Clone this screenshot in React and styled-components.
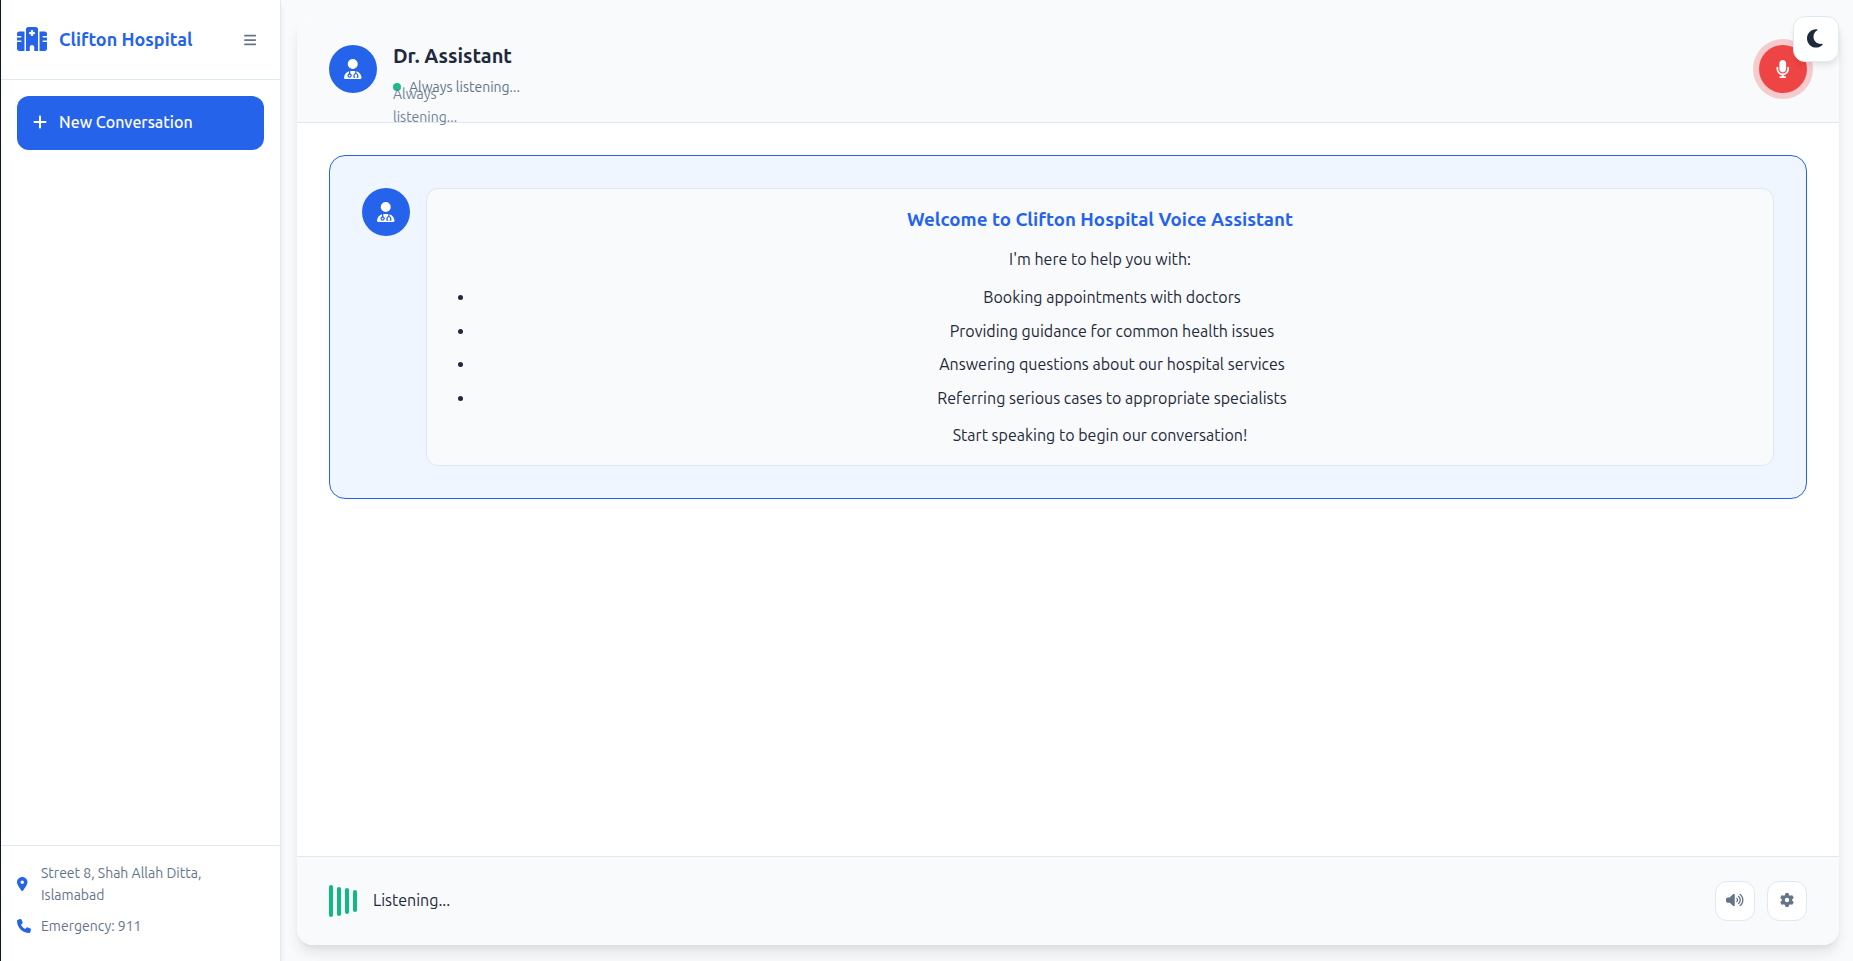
import React from 'react';
import styled, { createGlobalStyle, css } from 'styled-components';
import {
  FaHospital,
  FaBars,
  FaPlus,
  FaLocationDot,
  FaPhone,
  FaUserDoctor,
  FaMicrophone,
  FaMoon,
  FaVolumeHigh,
  FaGear,
} from 'react-icons/fa6';

const color = {
  primary: '#2563eb',
  primarySoft: '#eff6ff',
  page: '#f8fafc',
  surface: '#ffffff',
  border: '#e2e8f0',
  text: '#1e293b',
  muted: '#64748b',
  green: '#10b981',
  red: '#ef4444',
};

const GlobalStyle = createGlobalStyle`
  *, *::before, *::after { box-sizing: border-box; margin: 0; padding: 0; }
  body {
    font-family: Ubuntu, "Open Sans", "Noto Sans", sans-serif;
    font-size: 16px;
    line-height: 1.6;
    color: ${color.text};
    background: ${color.page};
    overflow: hidden;
  }
  button { font: inherit; cursor: pointer; }
`;

/* Font Awesome glyphs differ in width; $ratio is glyph width over height. */
const Glyph = styled.span`
  display: block;
  flex-shrink: 0;

  svg {
    display: block;
    width: ${({ $ratio = 1 }) => $ratio}em;
    height: 1em;
  }
`;

const Page = styled.div`
  display: flex;
  height: 100vh;
  border-left: 1px solid #0f172a;
`;

const Sidebar = styled.aside`
  display: flex;
  flex-direction: column;
  flex: 0 0 280px;
  background: ${color.surface};
  border-right: 1px solid ${color.border};
  box-shadow: 0 4px 6px -1px rgba(0, 0, 0, 0.1);
`;

const SidebarHeader = styled.div`
  display: flex;
  align-items: center;
  justify-content: space-between;
  height: 80px;
  padding: 0 24px 0 16px;
  border-bottom: 1px solid ${color.border};
`;

const Brand = styled.div`
  display: flex;
  align-items: center;
  gap: 12px;
  font-size: 18px;
  font-weight: 600;
  color: ${color.primary};
`;

const BrandGlyph = styled(Glyph)`
  font-size: 24px;
`;

const MenuButton = styled.button`
  border: none;
  background: none;
  color: ${color.muted};
  font-size: 14px;
`;

const SidebarBody = styled.div`
  flex: 1;
  padding: 16px;
`;

const NewButton = styled.button`
  display: flex;
  align-items: center;
  gap: 12px;
  width: 100%;
  padding: 14px 16px;
  border: none;
  border-radius: 12px;
  background: ${color.primary};
  color: #fff;
  font-weight: 500;
`;

const PlusGlyph = styled(Glyph)`
  margin-bottom: 1px;
`;

const SidebarFooter = styled.div`
  padding: 16px;
  border-top: 1px solid ${color.border};
`;

const Contact = styled.div`
  display: flex;
  align-items: center;
  gap: 8px;
  margin-bottom: 8px;
  font-size: 14px;
  color: ${color.muted};
`;

const ContactGlyph = styled(Glyph)`
  width: 16px;
  color: ${color.primary};
`;

const Main = styled.main`
  display: flex;
  flex-direction: column;
  flex: 1;
  margin: 16px 14px 16px 16px;
  border-radius: 16px;
  background: ${color.surface};
  box-shadow: 0 10px 15px -3px rgba(0, 0, 0, 0.1), 0 4px 6px -2px rgba(0, 0, 0, 0.05);
`;

const MainHeader = styled.header`
  display: flex;
  align-items: center;
  justify-content: space-between;
  padding: 24px 32px;
  border-bottom: 1px solid ${color.border};
  border-radius: 16px 16px 0 0;
  background: ${color.page};
`;

const Doctor = styled.div`
  display: flex;
  align-items: center;
  gap: 16px;
`;

const Avatar = styled.div`
  display: flex;
  align-items: center;
  justify-content: center;
  flex: 0 0 48px;
  height: 48px;
  border-radius: 50%;
  background: ${color.primary};
  color: #fff;
  font-size: 20px;
`;

const DoctorInfo = styled.div`
  position: relative;
`;

const DoctorName = styled.h2`
  font-size: 20px;
  font-weight: 600;
  line-height: 32px;
`;

const Status = styled.div`
  display: flex;
  align-items: center;
  gap: 8px;
  margin-top: 4px;
  font-size: 14px;
  color: ${color.muted};
`;

const Dot = styled.span`
  width: 8px;
  height: 8px;
  border-radius: 50%;
  background: ${color.green};
  opacity: 0.95;
`;

const StatusEcho = styled.div`
  position: absolute;
  top: 43px;
  left: 0;
  width: 70px;
  font-size: 14px;
  line-height: 23px;
  color: ${color.muted};
  opacity: 0.9;
`;

const MicButton = styled.button`
  display: flex;
  align-items: center;
  justify-content: center;
  width: 48px;
  height: 48px;
  border: none;
  border-radius: 50%;
  background: ${color.red};
  color: #fff;
  font-size: 18px;
  box-shadow: 0 0 0 6px rgba(239, 68, 68, 0.26);
`;

const Messages = styled.section`
  flex: 1;
  padding: 32px;
`;

const WelcomeCard = styled.article`
  display: flex;
  align-items: flex-start;
  gap: 16px;
  padding: 32px;
  border: 1px solid ${color.primary};
  border-radius: 16px;
  background: ${color.primarySoft};
`;

const Bubble = styled.div`
  flex: 1;
  padding: 16px 24px;
  border: 1px solid ${color.border};
  border-radius: 12px;
  background: ${color.page};
  text-align: center;
`;

const BubbleTitle = styled.h3`
  margin-bottom: 12px;
  font-size: 1.17em;
  font-weight: 600;
  color: ${color.primary};
`;

const Topics = styled.ul`
  margin: 12px 0;
  padding-left: 24px;
`;

const Topic = styled.li`
  & + & { margin-top: 8px; }
`;

const MainFooter = styled.footer`
  display: flex;
  align-items: center;
  justify-content: space-between;
  padding: 24px 32px;
  border-top: 1px solid ${color.border};
  border-radius: 0 0 16px 16px;
  background: ${color.page};
`;

const Group = styled.div`
  display: flex;
  align-items: center;
  gap: ${({ $gap }) => $gap}px;
`;

const WaveBar = styled.span`
  width: 4px;
  height: ${({ $height }) => $height}px;
  border-radius: 2px;
  background: ${color.green};
`;

const square = css`
  display: flex;
  align-items: center;
  justify-content: center;
  border: 1px solid ${color.border};
  border-radius: 12px;
  background: ${color.surface};
`;

const ControlButton = styled.button`
  ${square}
  width: 40px;
  height: 40px;
  padding-bottom: 2px;
  color: ${color.muted};
  font-size: 14px;
`;

const ThemeButton = styled.button`
  ${square}
  position: fixed;
  top: 16px;
  right: 14px;
  width: 46px;
  height: 46px;
  padding: 0 2px 1px 0;
  color: ${color.text};
  font-size: 20.8px;
  box-shadow: 0 4px 6px -1px rgba(0, 0, 0, 0.1);
`;

const topics = [
  'Booking appointments with doctors',
  'Providing guidance for common health issues',
  'Answering questions about our hospital services',
  'Referring serious cases to appropriate specialists',
];

const waveHeights = [31.6, 29, 26, 22.4];

function DoctorAvatar() {
  return (
    <Avatar>
      <Glyph $ratio={0.875}><FaUserDoctor /></Glyph>
    </Avatar>
  );
}

export default function App() {
  return (
    <>
      <GlobalStyle />
      <Page>
        <Sidebar>
          <SidebarHeader>
            <Brand>
              <BrandGlyph $ratio={1.25}><FaHospital /></BrandGlyph>
              <span>Clifton Hospital</span>
            </Brand>
            <MenuButton aria-label="Toggle menu">
              <Glyph $ratio={0.875}><FaBars /></Glyph>
            </MenuButton>
          </SidebarHeader>
          <SidebarBody>
            <NewButton>
              <PlusGlyph $ratio={0.875}><FaPlus /></PlusGlyph>
              <span>New Conversation</span>
            </NewButton>
          </SidebarBody>
          <SidebarFooter>
            <Contact>
              <ContactGlyph $ratio={0.75}><FaLocationDot /></ContactGlyph>
              <span>Street 8, Shah Allah Ditta, Islamabad</span>
            </Contact>
            <Contact>
              <ContactGlyph><FaPhone /></ContactGlyph>
              <span>Emergency: 911</span>
            </Contact>
          </SidebarFooter>
        </Sidebar>

        <Main>
          <MainHeader>
            <Doctor>
              <DoctorAvatar />
              <DoctorInfo>
                <DoctorName>Dr. Assistant</DoctorName>
                <Status>
                  <Dot />
                  <span>Always listening...</span>
                </Status>
                <StatusEcho>Always listening...</StatusEcho>
              </DoctorInfo>
            </Doctor>
            <MicButton aria-label="Microphone">
              <Glyph $ratio={0.75}><FaMicrophone /></Glyph>
            </MicButton>
          </MainHeader>

          <Messages>
            <WelcomeCard>
              <DoctorAvatar />
              <Bubble>
                <BubbleTitle>Welcome to Clifton Hospital Voice Assistant</BubbleTitle>
                <p>I'm here to help you with:</p>
                <Topics>
                  {topics.map((topic) => <Topic key={topic}>{topic}</Topic>)}
                </Topics>
                <p>Start speaking to begin our conversation!</p>
              </Bubble>
            </WelcomeCard>
          </Messages>

          <MainFooter>
            <Group $gap={16}>
              <Group $gap={4}>
                {waveHeights.map((height) => <WaveBar key={height} $height={height} />)}
              </Group>
              <span>Listening...</span>
            </Group>
            <Group $gap={12}>
              <ControlButton aria-label="Volume">
                <Glyph $ratio={1.25}><FaVolumeHigh /></Glyph>
              </ControlButton>
              <ControlButton aria-label="Settings">
                <Glyph><FaGear /></Glyph>
              </ControlButton>
            </Group>
          </MainFooter>
        </Main>
        <ThemeButton aria-label="Toggle theme">
          <Glyph $ratio={0.75}><FaMoon /></Glyph>
        </ThemeButton>
      </Page>
    </>
  );
}
